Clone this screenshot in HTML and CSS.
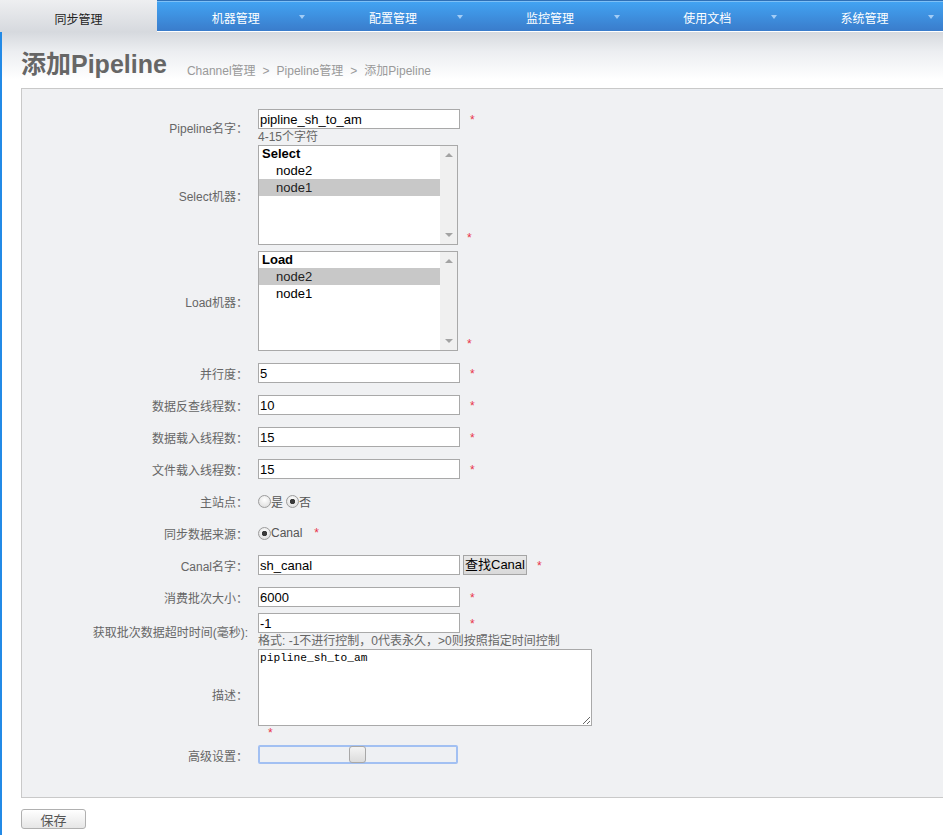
FILE: index.html
```html
<!DOCTYPE html>
<html lang="zh-CN">
<head>
<meta charset="utf-8">
<title>添加Pipeline</title>
<link rel="stylesheet" href="styles.css">
</head>
<body>
<div class="nav">
  <div class="tab active">同步管理</div>
  <div class="tab">机器管理<span class="caret"></span></div>
  <div class="tab">配置管理<span class="caret"></span></div>
  <div class="tab">监控管理<span class="caret"></span></div>
  <div class="tab">使用文档<span class="caret"></span></div>
  <div class="tab">系统管理<span class="caret"></span></div>
</div>
<div class="page">
  <div class="header">
    <h1 class="title">添加Pipeline</h1>
    <div class="crumbs"><span>Channel管理</span><span class="sep">&gt;</span><span>Pipeline管理</span><span class="sep">&gt;</span><span>添加Pipeline</span></div>
  </div>
  <div class="formbox">
    <div class="row">
      <div class="label">Pipeline名字：</div>
      <div class="field col">
        <div class="line"><input class="text" type="text" value="pipline_sh_to_am"><span class="star">*</span></div>
        <div class="hint">4-15个字符</div>
      </div>
    </div>
    <div class="row">
      <div class="label">Select机器：</div>
      <div class="field bottom">
        <div class="listbox">
          <div class="list">
            <div class="og">Select</div>
            <div class="opt">node2</div>
            <div class="opt sel">node1</div>
          </div>
          <div class="sbar"><span class="up"></span><span class="down"></span></div>
        </div>
        <span class="star sstar">*</span>
      </div>
    </div>
    <div class="row mt6">
      <div class="label">Load机器：</div>
      <div class="field bottom">
        <div class="listbox">
          <div class="list">
            <div class="og">Load</div>
            <div class="opt sel">node2</div>
            <div class="opt">node1</div>
          </div>
          <div class="sbar"><span class="up"></span><span class="down"></span></div>
        </div>
        <span class="star sstar">*</span>
      </div>
    </div>
    <div class="row mt12">
      <div class="label">并行度：</div>
      <div class="field"><input class="text" type="text" value="5"><span class="star">*</span></div>
    </div>
    <div class="row mt12">
      <div class="label">数据反查线程数：</div>
      <div class="field"><input class="text" type="text" value="10"><span class="star">*</span></div>
    </div>
    <div class="row mt12">
      <div class="label">数据载入线程数：</div>
      <div class="field"><input class="text" type="text" value="15"><span class="star">*</span></div>
    </div>
    <div class="row mt12">
      <div class="label">文件载入线程数：</div>
      <div class="field"><input class="text" type="text" value="15"><span class="star">*</span></div>
    </div>
    <div class="row mt12">
      <div class="label">主站点：</div>
      <div class="field radios">
        <span class="radio"></span><span class="rtext">是</span>
        <span class="radio on gap"></span><span class="rtext">否</span>
      </div>
    </div>
    <div class="row mt12">
      <div class="label">同步数据来源：</div>
      <div class="field radios">
        <span class="radio on"></span><span class="rtext">Canal</span><span class="star cstar">*</span>
      </div>
    </div>
    <div class="row mt12">
      <div class="label">Canal名字：</div>
      <div class="field"><input class="text" type="text" value="sh_canal"><button class="btn" type="button">查找Canal</button><span class="star">*</span></div>
    </div>
    <div class="row mt12">
      <div class="label">消费批次大小：</div>
      <div class="field"><input class="text" type="text" value="6000"><span class="star">*</span></div>
    </div>
    <div class="row mt6">
      <div class="label">获取批次数据超时时间(毫秒):</div>
      <div class="field col">
        <div class="line"><input class="text" type="text" value="-1"><span class="star">*</span></div>
        <div class="hint">格式: -1不进行控制，0代表永久，&gt;0则按照指定时间控制</div>
      </div>
    </div>
    <div class="row">
      <div class="label">描述：</div>
      <div class="field col">
        <textarea class="area" spellcheck="false">pipline_sh_to_am</textarea>
        <span class="star astar">*</span>
      </div>
    </div>
    <div class="row mt5">
      <div class="label">高级设置：</div>
      <div class="field">
        <div class="slider"><span class="thumb"></span></div>
      </div>
    </div>
  </div>
  <button class="save" type="button">保存</button>
</div>
</body>
</html>
```

FILE: styles.css
```css
* { box-sizing: border-box; }
html, body { margin: 0; padding: 0; }
body {
  font-family: "Liberation Sans", "Noto Sans CJK SC", sans-serif;
  font-size: 12px;
  color: #666;
  background: #fff;
  width: 943px;
  height: 835px;
  overflow: hidden;
}

/* top navigation */
.nav { display: flex; height: 32px; }
.tab {
  flex: 1;
  position: relative;
  display: flex;
  align-items: center;
  justify-content: center;
  padding-top: 4px;
  color: #fff;
  font-size: 12px;
  background: linear-gradient(to bottom, #2f70b6 0, #2f70b6 1px, #7ec0f6 1px, #7ec0f6 2px, #42a3f2 2px, #3a7ccb 100%);
  border-bottom: 1px solid #fff;
}
.tab.active {
  color: #222;
  background: linear-gradient(to bottom, #eeeff1, #d6d9de);
  border-bottom: 0;
}
.caret {
  position: absolute;
  right: 9px;
  top: 15px;
  width: 0;
  height: 0;
  border-left: 3px solid transparent;
  border-right: 3px solid transparent;
  border-top: 4px solid #a3cdf6;
}

/* page */
.page {
  border-left: 2px solid #238ae6;
  height: 803px;
}
.header {
  height: 56px;
  display: flex;
  align-items: flex-end;
  padding: 0 0 9px 19px;
  background: linear-gradient(to bottom, #d6d9de, #eceef1 35%, #fff 85%);
}
.title {
  margin: 0;
  font-size: 25px;
  line-height: 29px;
  font-weight: bold;
  color: #666;
}
.crumbs {
  display: flex;
  margin: 0 0 1px 20px;
  font-size: 12px;
  line-height: 14px;
  color: #999;
}
.sep { margin: 0 7px; }

/* form */
.formbox {
  margin-left: 19px;
  margin-right: -30px;
  border: 1px solid #c9c9c9;
  background: #f0f1f3;
  padding: 20px 0 32px;
}
.row { display: flex; align-items: center; }
.mt5 { margin-top: 5px; }
.mt6 { margin-top: 6px; }
.mt12 { margin-top: 12px; }
.label {
  flex: none;
  width: 226px;
  margin-right: 10px;
  text-align: right;
  font-size: 12px;
  color: #666;
}
.field { display: flex; align-items: flex-start; min-height: 20px; }
.field.col { flex-direction: column; }
.field.bottom { align-items: flex-end; }
.line { display: flex; align-items: flex-start; }

.text {
  display: block;
  width: 202px;
  height: 20px;
  margin: 0;
  padding: 0 1px;
  border: 1px solid #a9a9a9;
  background: #fff;
  font-family: "Liberation Sans", "Noto Sans CJK SC", sans-serif;
  font-size: 13px;
  color: #000;
  outline: none;
}
.star {
  color: #e8334a;
  font-size: 12px;
  line-height: 14px;
  margin-left: 10px;
  margin-top: 4px;
}
.sstar { margin-left: 9px; margin-top: 0; }
.cstar { margin-left: 12px; align-self: flex-start; margin-top: 3px; }
.astar { margin-left: 10px; margin-top: 0; }
.hint { font-size: 12px; line-height: 16px; color: #666; white-space: nowrap; }

/* listbox */
.listbox {
  display: flex;
  width: 200px;
  height: 100px;
  border: 1px solid #a9a9a9;
  background: #fff;
}
.list { flex: 1; font-size: 13px; line-height: 17px; color: #000; margin-top: -1px; }
.og { font-weight: bold; padding-left: 3px; }
.opt { padding-left: 17px; }
.opt.sel { background: #c8c8c8; color: #222; }
.sbar {
  width: 17px;
  background: #f0f0f0;
  display: flex;
  flex-direction: column;
  justify-content: space-between;
  align-items: center;
  padding: 7px 0;
}
.up, .down { width: 0; height: 0; border-left: 4px solid transparent; border-right: 4px solid transparent; }
.up { border-bottom: 4px solid #a3a3a3; }
.down { border-top: 4px solid #a3a3a3; }

/* radios */
.radios { align-items: center; height: 20px; }
.radio {
  flex: none;
  width: 13px;
  height: 13px;
  border: 1px solid #9c9c9c;
  border-radius: 50%;
  background: radial-gradient(circle at 50% 35%, #ffffff, #d8d8d8);
}
.radio.on {
  background: radial-gradient(circle, #3a3a3a 0, #3a3a3a 2.4px, transparent 3px), radial-gradient(circle at 50% 35%, #ffffff, #d8d8d8);
}
.radio.gap { margin-left: 3px; }
.rtext { font-size: 12px; color: #555; }

/* button */
.btn {
  height: 20px;
  margin: 0 0 0 3px;
  padding: 0 1px;
  border: 1px solid #a5a5a5;
  background: linear-gradient(to bottom, #e8e8e8, #d9d9d9);
  font-family: "Liberation Sans", "Noto Sans CJK SC", sans-serif;
  font-size: 13px;
  color: #000;
  line-height: 16px;
}

/* textarea */
.area {
  display: block;
  width: 334px;
  height: 77px;
  margin: 0;
  padding: 1px 1px;
  border: 1px solid #a9a9a9;
  background: #fff;
  font-family: "Liberation Mono", monospace;
  font-size: 11.2px;
  line-height: 14px;
  color: #000;
  outline: none;
}

/* slider */
.slider {
  display: flex;
  width: 200px;
  height: 19px;
  border: 2px solid #a2c0f2;
  border-radius: 2px;
  background: #eef0f3;
  padding-left: 89px;
}
.thumb {
  width: 17px;
  height: 17px;
  margin-top: -1px;
  border: 1px solid #a8a8a8;
  border-radius: 3px;
  background: linear-gradient(to bottom, #f4f4f4, #dcdcdc);
}

/* save */
.save {
  display: block;
  margin: 11px 0 0 19px;
  width: 65px;
  height: 20px;
  padding: 0;
  border: 1px solid #b0b0b0;
  border-radius: 3px;
  background: linear-gradient(to bottom, #ffffff, #e6e6e6);
  font-family: "Liberation Sans", "Noto Sans CJK SC", sans-serif;
  font-size: 13px;
  color: #555;
}
```
